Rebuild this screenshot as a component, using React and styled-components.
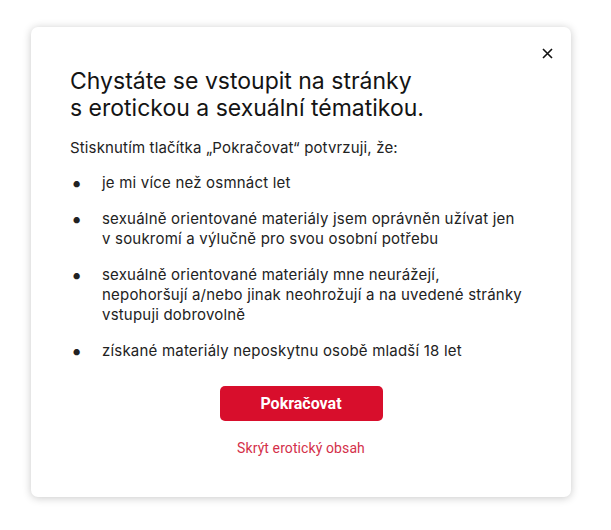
import React from "react";
import styled, { createGlobalStyle } from "styled-components";

const Global = createGlobalStyle`
  html, body { margin: 0; padding: 0; background: #fff; }
  body { font-family: Inter, "Liberation Sans", Arial, sans-serif; }
  * { box-sizing: border-box; }
`;

const Page = styled.div`
  padding: 27px 40px 34px 31px;
`;

const Card = styled.section`
  position: relative;
  width: 540px;
  background: #fff;
  border-radius: 7px;
  box-shadow: 0 1px 8px rgba(0, 0, 0, 0.22);
  padding: 41px 39px 40px 39px;
  color: #1d1d1d;
`;

const Close = styled.button`
  position: absolute;
  top: 17px;
  right: 15px;
  width: 18px;
  height: 18px;
  padding: 0;
  border: 0;
  background: transparent;
  display: flex;
  align-items: center;
  justify-content: center;
  cursor: pointer;
`;

const Title = styled.h2`
  margin: 0;
  font-size: 23px;
  line-height: 27px;
  font-weight: 400;
  color: #141414;
`;

const Lead = styled.p`
  margin: 16px 0 0;
  font-size: 15px;
  line-height: 20px;
  letter-spacing: 0.15px;
  color: #222;
`;

const List = styled.ul`
  margin: 15px 0 0;
  padding: 0;
  list-style: none;
  display: flex;
  flex-direction: column;
  gap: 16px;
`;

const Item = styled.li`
  display: grid;
  grid-template-columns: 32px minmax(0, 425px);
  font-size: 15px;
  line-height: 20px;
  letter-spacing: 0.2px;
  color: #222;
  &::before {
    content: "•";
    font-size: 20px;
    padding-left: 1px;
  }
`;

const Actions = styled.div`
  margin-top: 25px;
  display: flex;
  flex-direction: column;
  align-items: center;
  gap: 18px;
`;

const Primary = styled.button`
  width: 163px;
  height: 35px;
  border: 0;
  border-radius: 5px;
  background: #d80e2c;
  color: #fff;
  font-family: Roboto, "Liberation Sans", Arial, sans-serif;
  font-weight: 700;
  font-size: 16px;
  cursor: pointer;
`;

const Link = styled.a`
  font-family: Roboto, "Liberation Sans", Arial, sans-serif;
  font-size: 14px;
  line-height: 18px;
  letter-spacing: 0.1px;
  color: #d4304a;
  text-decoration: none;
  cursor: pointer;
`;

const items = [
  "je mi více než osmnáct let",
  "sexuálně orientované materiály jsem oprávněn užívat jen v soukromí a výlučně pro svou osobní potřebu",
  "sexuálně orientované materiály mne neurážejí, nepohoršují a/nebo jinak neohrožují a na uvedené stránky vstupuji dobrovolně",
  "získané materiály neposkytnu osobě mladší 18 let",
];

export default function App() {
  return (
    <>
      <Global />
      <Page>
        <Card>
          <Close aria-label="Zavřít">
            <svg width="11" height="11" viewBox="0 0 11 11">
              <path d="M1 1 L10 10 M10 1 L1 10" stroke="#111" strokeWidth="1.6" />
            </svg>
          </Close>
          <Title>
            Chystáte se vstoupit na stránky
            <br />s erotickou a sexuální tématikou.
          </Title>
          <Lead>Stisknutím tlačítka „Pokračovat“ potvrzuji, že:</Lead>
          <List>
            {items.map((t) => (
              <Item key={t}>{t}</Item>
            ))}
          </List>
          <Actions>
            <Primary>Pokračovat</Primary>
            <Link>Skrýt erotický obsah</Link>
          </Actions>
        </Card>
      </Page>
    </>
  );
}
